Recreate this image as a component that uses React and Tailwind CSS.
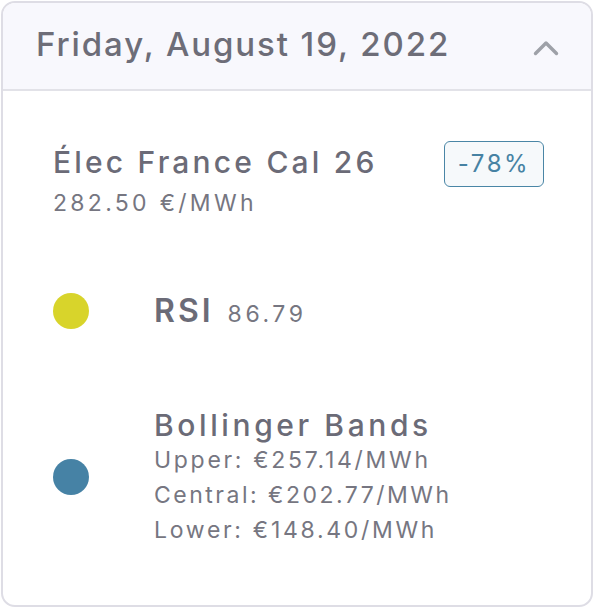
export default function App() {
  const font = { fontFamily: "Inter, 'Noto Sans', sans-serif" };
  return (
    <div className="w-[594px] h-[608px] bg-white p-px" style={font}>
      <div className="w-full h-full rounded-[14px] border-2 border-[#dedde5] overflow-hidden flex flex-col">
        <div className="h-[88px] bg-[#f8f8fd] border-b-2 border-[#e2e2e8] flex items-center justify-between pl-[33px] pr-[32px]">
          <span className="text-[33px] font-medium text-[#6d6d78] tracking-[1.9px] mt-[-2px]">Friday, August 19, 2022</span>
          <svg width="26" height="17" viewBox="0 0 26 17" fill="none" className="mt-[2px]">
            <path d="M2.5 14.5 L13 4 L23.5 14.5" stroke="#9ea1a8" strokeWidth="3.4" strokeLinecap="round" strokeLinejoin="round" />
          </svg>
        </div>
        <div className="flex-1 pl-[50px] pr-[47px] pt-[53px]">
          <div className="flex justify-between items-start">
            <div className="flex flex-col">
              <span className="text-[30px] leading-[36px] font-medium text-[#6b6b77] tracking-[3.2px]">Élec France Cal 26</span>
              <span className="text-[23px] leading-[30px] text-[#767681] mt-[8px] tracking-[3.3px]">282.50 €/MWh</span>
            </div>
            <div className="mt-[-3px] h-[46px] w-[100px] rounded-[6px] border-[1.5px] border-[#4a86a6] bg-[#f6f9fb] flex items-center justify-center text-[24px] text-[#4682a3] tracking-[2.6px]">-78%</div>
          </div>
          <div className="flex items-center mt-[69px]">
            <div className="w-[36px] h-[36px] rounded-full bg-[#d8d42b]"></div>
            <div className="ml-[65px] flex items-baseline gap-[14px]">
              <span className="text-[32px] font-semibold text-[#6b6b77] tracking-[3px]">RSI</span>
              <span className="text-[23px] text-[#767681] tracking-[3.6px]">86.79</span>
            </div>
          </div>
          <div className="flex items-center mt-[72px]">
            <div className="w-[36px] h-[36px] rounded-full bg-[#4682a5] mt-[-2px]"></div>
            <div className="ml-[65px] flex flex-col">
              <span className="text-[30px] leading-[36px] font-medium text-[#6b6b77] tracking-[3.6px]">Bollinger Bands</span>
              <span className="text-[23px] leading-[35px] text-[#767681] tracking-[2.7px]">Upper: €257.14/MWh</span>
              <span className="text-[23px] leading-[35px] text-[#767681] tracking-[2.5px]">Central: €202.77/MWh</span>
              <span className="text-[23px] leading-[35px] text-[#767681] tracking-[2.7px]">Lower: €148.40/MWh</span>
            </div>
          </div>
        </div>
      </div>
    </div>
  );
}
